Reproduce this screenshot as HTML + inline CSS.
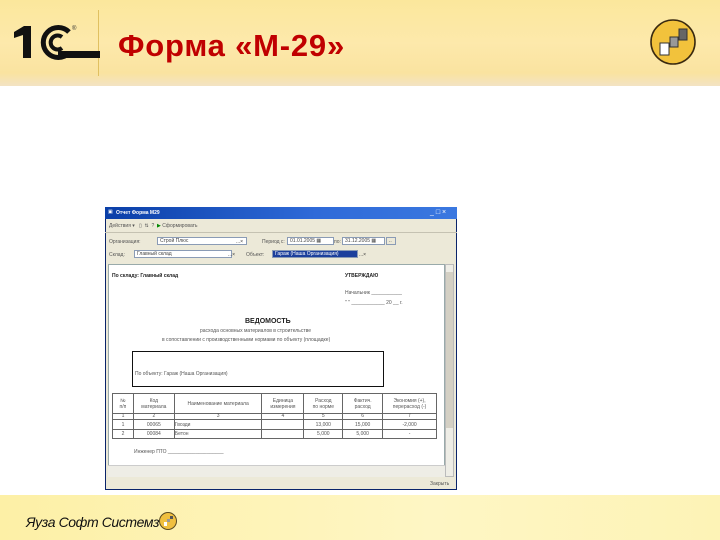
<!DOCTYPE html><html><head><meta charset="utf-8"><style>
*{margin:0;padding:0;box-sizing:border-box}
body{width:720px;height:540px;position:relative;overflow:hidden;background:#fff;font-family:"Liberation Sans",sans-serif}
.a{position:absolute}
.t{position:absolute;font-size:5px;color:#555;white-space:nowrap}
.hdr{left:0;top:0;width:720px;height:86px;background:linear-gradient(180deg,#fbe79c 0%,#fde9ab 50%,#fae3a0 85%,#f3e3c4 100%)}
.ftr{left:0;top:495px;width:720px;height:45px;background:linear-gradient(90deg,#fdf0a6,#fef6c4 60%,#fdf3b6)}
.inp{position:absolute;height:8px;border:1px solid #8a9bb5;background:#fff;font-size:5px;color:#444;padding-left:2px;line-height:6px}
table{position:absolute;border-collapse:collapse;font-size:5px;color:#555}
td{border:1px solid #666;text-align:center;padding:0}
</style></head><body>
<div class="a hdr"></div>
<div class="a" style="left:98px;top:10px;width:1px;height:66px;background:#e0c060"></div>
<svg class="a" style="left:12px;top:20px" width="90" height="42" viewBox="0 0 90 42">
<path d="M2 12 L12 6 L19 6 L19 38 L11 38 L11 15 L2 18Z" fill="#111"/>
<path d="M57 12 A15 15 0 1 0 57 33" stroke="#111" stroke-width="5" fill="none"/>
<path d="M50 17 A7 7 0 1 0 50 28" stroke="#111" stroke-width="4" fill="none"/>
<rect x="46" y="31" width="42" height="7" fill="#111"/>
<text x="60" y="10" font-size="6" fill="#333" font-family="Liberation Sans">®</text>
</svg>
<div class="a" style="left:118px;top:28px;font-size:31px;font-weight:bold;color:#c00000;white-space:nowrap;letter-spacing:0.8px">Форма «М-29»</div>
<svg class="a" style="left:649px;top:17px" width="50" height="50" viewBox="0 0 50 50">
<circle cx="24" cy="25" r="22" fill="#f2c23c" stroke="#3a2a10" stroke-width="1.6"/>
<rect x="11" y="26" width="9" height="12" fill="#fff" stroke="#333" stroke-width="1"/>
<rect x="21" y="20" width="8" height="10" fill="#999" stroke="#333" stroke-width="1"/>
<rect x="30" y="12" width="8" height="11" fill="#666" stroke="#333" stroke-width="1"/>
</svg>
<div class="a ftr"></div>
<div class="a" style="left:26px;top:514px;font-size:14px;font-style:italic;color:#111;letter-spacing:-0.4px">Яуза Софт Системз</div>
<svg class="a" style="left:158px;top:511px" width="20" height="20" viewBox="0 0 20 20"><circle cx="10" cy="10" r="8.5" fill="#f0c040" stroke="#5a4a20" stroke-width="1"/><rect x="6" y="11" width="3" height="4" fill="#fff"/><rect x="9" y="8" width="3" height="3" fill="#999"/><rect x="12" y="5" width="3" height="3" fill="#555"/></svg>

<div class="a" style="left:105px;top:207px;width:352px;height:283px;background:#ece9d8;border:1px solid #0a246a"></div>
<div class="a" style="left:105px;top:207px;width:352px;height:12px;background:linear-gradient(90deg,#0a3fa8,#2f6ad8 60%,#3a78e0)"></div>
<div class="t" style="left:116px;top:210px;color:#fff;font-weight:bold">Отчет Форма М29</div>
<div class="t" style="left:108px;top:209px;color:#fff">▣</div>
<div class="t" style="left:430px;top:209px;color:#fff;font-size:7px">_ □ ×</div>
<div class="t" style="left:109px;top:223px">Действия ▾ &nbsp; ▯ &nbsp;⇅&nbsp; ? &nbsp;<span style="color:#080">▶</span> Сформировать</div>
<div class="a" style="left:105px;top:232px;width:352px;height:1px;background:#c5c2b2"></div>
<div class="t" style="left:109px;top:239px">Организация:</div>
<div class="inp" style="left:157px;top:237px;width:90px">Строй Плюс</div>
<div class="t" style="left:236px;top:239px;color:#333">...×</div>
<div class="t" style="left:262px;top:239px">Период с:</div>
<div class="inp" style="left:287px;top:237px;width:47px">01.01.2005 ▦</div>
<div class="t" style="left:334px;top:239px">по:</div>
<div class="inp" style="left:342px;top:237px;width:43px">31.12.2005 ▦</div>
<div class="inp" style="left:386px;top:237px;width:10px;background:#ece9d8">..</div>
<div class="t" style="left:109px;top:252px">Склад:</div>
<div class="inp" style="left:134px;top:250px;width:98px">Главный склад</div>
<div class="t" style="left:228px;top:252px;color:#333">...×</div>
<div class="t" style="left:246px;top:252px">Объект:</div>
<div class="inp" style="left:272px;top:250px;width:86px;background:#1c3f9c;color:#fff">Гараж (Наша Организация)</div>
<div class="t" style="left:359px;top:252px;color:#333">...×</div>
<div class="a" style="left:108px;top:264px;width:337px;height:213px;background:#fff;border:1px solid #9aa"></div>
<div class="a" style="left:445px;top:264px;width:9px;height:213px;background:#eeede6;border:1px solid #bbb"></div>
<div class="a" style="left:446px;top:272px;width:7px;height:156px;background:#d4d0c4"></div>
<div class="a" style="left:108px;top:465px;width:337px;height:12px;background:#eeede6;border-top:1px solid #ccc"></div>
<div class="t" style="left:112px;top:273px;font-weight:bold;color:#222">По складу: Главный склад</div>
<div class="t" style="left:345px;top:273px;font-weight:bold;color:#222">УТВЕРЖДАЮ</div>
<div class="t" style="left:345px;top:290px">Начальник ___________</div>
<div class="t" style="left:345px;top:300px">" " ____________ 20 __ г.</div>
<div class="t" style="left:245px;top:318px;font-size:7px;font-weight:bold;color:#222">ВЕДОМОСТЬ</div>
<div class="t" style="left:200px;top:328px">расхода основных материалов в строительстве</div>
<div class="t" style="left:162px;top:337px">в сопоставлении с производственными нормами по объекту (площадке)</div>
<div class="a" style="left:132px;top:351px;width:252px;height:36px;border:1px solid #111"></div>
<div class="t" style="left:135px;top:371px">По объекту: Гараж (Наша Организация)</div>
<table style="left:112px;top:393px;width:325px">
<colgroup><col style="width:21px"><col style="width:41px"><col style="width:88px"><col style="width:42px"><col style="width:39px"><col style="width:40px"><col style="width:54px"></colgroup>
<tr style="height:20px"><td>№<br>п/п</td><td>Код<br>материала</td><td>Наименование материала</td><td>Единица<br>измерения</td><td>Расход<br>по норме</td><td>Фактич.<br>расход</td><td>Экономия (+),<br>перерасход (-)</td></tr>
<tr style="height:6px;line-height:5px"><td>1</td><td>2</td><td>3</td><td>4</td><td>5</td><td>6</td><td>7</td></tr>
<tr style="height:10px"><td>1</td><td>00065</td><td style="text-align:left">Гвозди</td><td></td><td>13,000</td><td>15,000</td><td>-2,000</td></tr>
<tr style="height:9px"><td>2</td><td>00084</td><td style="text-align:left">Бетон</td><td></td><td>5,000</td><td>5,000</td><td>-</td></tr>
</table>
<div class="t" style="left:134px;top:449px">Инженер ПТО ____________________</div>
<div class="t" style="left:430px;top:481px">Закрыть</div>
</body></html>
